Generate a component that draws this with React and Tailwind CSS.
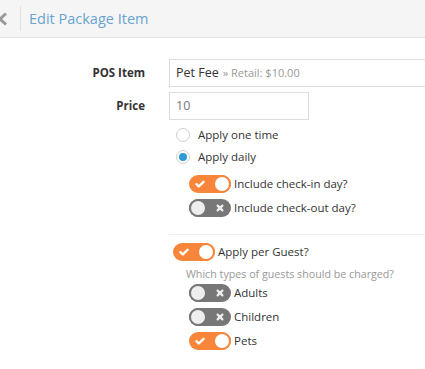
import React from 'react'

function Toggle({ on }) {
  return on ? (
    <span className="relative inline-flex h-[18px] w-[42px] shrink-0 items-center rounded-full bg-[#f7863a]">
      <svg className="ml-[6px] h-[10px] w-[10px]" viewBox="0 0 10 10" fill="none" stroke="white" strokeWidth={2.4} strokeLinecap="round" strokeLinejoin="round">
        <path d="M1.5 5.2l2.3 2.3L8.5 2.8" />
      </svg>
      <span className="absolute right-0 top-0 h-[18px] w-[18px] rounded-full border-2 border-[#f7863a] bg-white" />
    </span>
  ) : (
    <span className="relative inline-flex h-[18px] w-[42px] shrink-0 items-center justify-end rounded-full bg-[#777]">
      <span className="absolute left-0 top-0 h-[18px] w-[18px] rounded-full border-2 border-[#777] bg-[#eee]" />
      <svg className="mr-[7px] h-[8px] w-[8px]" viewBox="0 0 10 10" fill="none" stroke="#eee" strokeWidth={2.8} strokeLinecap="round">
        <path d="M2 2l6 6M8 2l-6 6" />
      </svg>
    </span>
  )
}

function Radio({ checked, label }) {
  return (
    <label className="flex h-[14px] items-center gap-[8px]">
      <span className="flex h-[14px] w-[14px] items-center justify-center rounded-full border border-[#cfcfcf] bg-white">
        {checked && <span className="h-[8px] w-[8px] rounded-full bg-[#2e9bd6]" />}
      </span>
      <span>{label}</span>
    </label>
  )
}

export default function App() {
  return (
    <div className="min-h-[369px] bg-white text-[11.5px] leading-[16px] text-[#333]" style={{ fontFamily: '"Open Sans", sans-serif' }}>
      {/* Header */}
      <div className="flex h-[38px] items-center border-b border-[#e3e3e3] bg-[#f5f5f5]">
        <svg className="ml-[-3px] h-[14px] w-[11px]" viewBox="0 0 11 14" fill="none" stroke="#999" strokeWidth={3}>
          <path d="M9 1.5L3 7l6 5.5" />
        </svg>
        <div className="ml-[12px] h-[25px] w-px bg-[#e0e0e0]" />
        <h1 className="ml-[8px] text-[14.5px] text-[#6aa3d1]">Edit Package Item</h1>
      </div>

      {/* Form */}
      <div className="pt-[21px]">
        <div className="flex items-center">
          <div className="w-[145px] text-right font-bold">POS Item</div>
          <div className="ml-[24px] flex h-[28px] flex-1 items-center border border-r-0 border-[#ddd] px-[6px]">
            <span className="text-[12.5px]">Pet Fee</span>
            <span className="ml-[4px] text-[11px] text-[#999]">» Retail: $10.00</span>
          </div>
        </div>
        <div className="mt-[5px] flex items-center">
          <div className="w-[145px] text-right font-bold">Price</div>
          <div className="ml-[24px] flex h-[28px] w-[140px] items-center border border-[#ddd] px-[6px] text-[12.5px] text-[#777]">10</div>
        </div>

        <div className="ml-[176px] mt-[8px] flex flex-col gap-[8px]">
          <Radio label="Apply one time" />
          <Radio checked label="Apply daily" />
        </div>

        <div className="ml-[189px] mt-[11px] flex flex-col gap-[6px]">
          <div className="flex items-center gap-[3px]">
            <Toggle on />
            <span>Include check-in day?</span>
          </div>
          <div className="flex items-center gap-[3px]">
            <Toggle />
            <span>Include check-out day?</span>
          </div>
        </div>

        <div className="ml-[169px] mt-[17px] border-t border-[#eee]" />

        <div className="ml-[173px] mt-[8px] flex items-center gap-[3px]">
          <Toggle on />
          <span>Apply per Guest?</span>
        </div>
        <div className="ml-[186px] mt-[5px] text-[10.7px] text-[#999]">Which types of guests should be charged?</div>
        <div className="ml-[189px] mt-[2px] flex flex-col gap-[6px]">
          <div className="flex items-center gap-[3px]">
            <Toggle />
            <span>Adults</span>
          </div>
          <div className="flex items-center gap-[3px]">
            <Toggle />
            <span>Children</span>
          </div>
          <div className="flex items-center gap-[3px]">
            <Toggle on />
            <span>Pets</span>
          </div>
        </div>
      </div>
    </div>
  )
}
